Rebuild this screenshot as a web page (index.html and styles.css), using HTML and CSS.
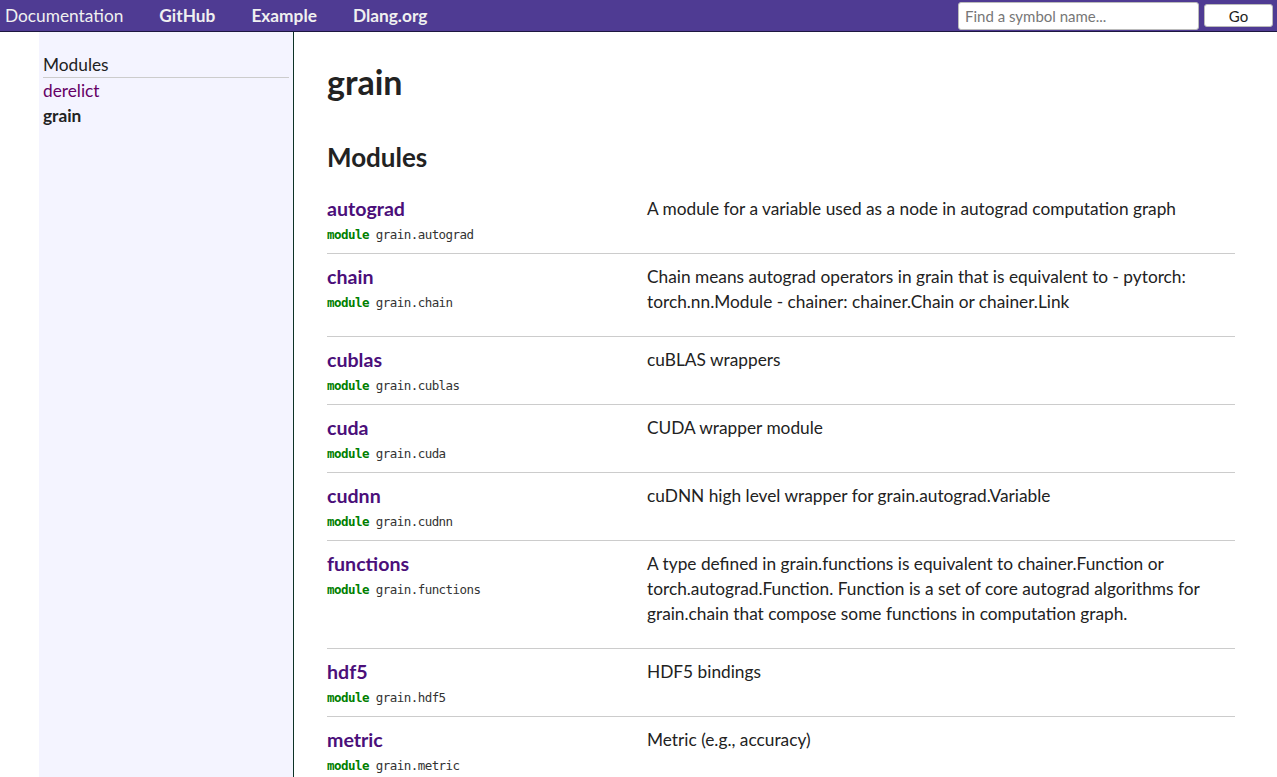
FILE: index.html
```html
<!DOCTYPE html>
<html>
<head>
<meta charset="utf-8">
<title>grain</title>
<link rel="stylesheet" href="styles.css">
</head>
<body>
<header class="navbar">
  <nav class="nav-links">
    <a class="nav-home" href="#">Documentation</a>
    <a class="nav-link" href="#">GitHub</a>
    <a class="nav-link" href="#">Example</a>
    <a class="nav-link" href="#">Dlang.org</a>
  </nav>
  <form class="search">
    <input class="search-input" type="text" placeholder="Find a symbol name...">
    <button class="search-btn" type="button">Go</button>
  </form>
</header>
<div class="page">
  <aside class="sidebar">
    <div class="side-title">Modules</div>
    <ul class="side-list">
      <li><a class="side-link" href="#">derelict</a></li>
      <li><span class="side-current">grain</span></li>
    </ul>
  </aside>
  <main class="content">
    <h1 class="title">grain</h1>
    <h2 class="section">Modules</h2>
    <table class="members">
      <tr>
        <td class="name-cell"><a class="member-name" href="#">autograd</a><div class="decl"><span class="kw">module</span> grain.autograd</div></td>
        <td class="desc-cell"><p>A module for a variable used as a node in autograd computation graph</p></td>
      </tr>
      <tr>
        <td class="name-cell"><a class="member-name" href="#">chain</a><div class="decl"><span class="kw">module</span> grain.chain</div></td>
        <td class="desc-cell"><p>Chain means autograd operators in grain that is equivalent to - pytorch: torch.nn.Module - chainer: chainer.Chain or chainer.Link</p></td>
      </tr>
      <tr>
        <td class="name-cell"><a class="member-name" href="#">cublas</a><div class="decl"><span class="kw">module</span> grain.cublas</div></td>
        <td class="desc-cell"><p>cuBLAS wrappers</p></td>
      </tr>
      <tr>
        <td class="name-cell"><a class="member-name" href="#">cuda</a><div class="decl"><span class="kw">module</span> grain.cuda</div></td>
        <td class="desc-cell"><p>CUDA wrapper module</p></td>
      </tr>
      <tr>
        <td class="name-cell"><a class="member-name" href="#">cudnn</a><div class="decl"><span class="kw">module</span> grain.cudnn</div></td>
        <td class="desc-cell"><p>cuDNN high level wrapper for grain.autograd.Variable</p></td>
      </tr>
      <tr>
        <td class="name-cell"><a class="member-name" href="#">functions</a><div class="decl"><span class="kw">module</span> grain.functions</div></td>
        <td class="desc-cell"><p>A type defined in grain.functions is equivalent to chainer.Function or torch.autograd.Function. Function is a set of core autograd algorithms for grain.chain that compose some functions in computation graph.</p></td>
      </tr>
      <tr>
        <td class="name-cell"><a class="member-name" href="#">hdf5</a><div class="decl"><span class="kw">module</span> grain.hdf5</div></td>
        <td class="desc-cell"><p>HDF5 bindings</p></td>
      </tr>
      <tr>
        <td class="name-cell"><a class="member-name" href="#">metric</a><div class="decl"><span class="kw">module</span> grain.metric</div></td>
        <td class="desc-cell"><p>Metric (e.g., accuracy)</p></td>
      </tr>
    </table>
  </main>
</div>
</body>
</html>
```

FILE: styles.css
```css
html, body {
  margin: 0;
  padding: 0;
  background: #fff;
  color: #222;
  font-family: Lato, "Open Sans", sans-serif;
  font-size: 17.3px;
  overflow: hidden;
}

.navbar {
  display: flex;
  align-items: center;
  justify-content: space-between;
  height: 31px;
  background: #4f3b93;
  border-bottom: 1px solid #1d1740;
}

.nav-links {
  display: flex;
  align-items: center;
}

.nav-links a {
  color: #f0f0f0;
  text-decoration: none;
  font-size: 17.3px;
}

.nav-home {
  padding: 0 36px 0 5px;
}

.nav-link {
  font-weight: bold;
  padding-right: 36px;
}

.search {
  display: flex;
  align-items: center;
  gap: 5px;
  padding-right: 4px;
}

.search-input {
  width: 241px;
  height: 28px;
  box-sizing: border-box;
  border: 1px solid #bbb;
  border-radius: 3px;
  padding: 0 6px;
  font-family: inherit;
  font-size: 15px;
  color: #333;
}

.search-input::placeholder {
  color: #777;
}

.search-btn {
  width: 69px;
  height: 23px;
  box-sizing: border-box;
  border: 1px solid #bbb;
  border-radius: 3px;
  background: #fff;
  font-family: inherit;
  font-size: 15px;
  color: #222;
  padding: 0;
}

.page {
  display: flex;
  min-height: 745px;
}

.sidebar {
  width: 255px;
  margin-left: 39px;
  background: #f4f4ff;
  border-right: 1px solid #0d3326;
  padding: 21px 4px 0 4px;
  box-sizing: border-box;
}

.side-title {
  line-height: 24px;
  border-bottom: 1px solid #ccc;
}

.side-list {
  list-style: none;
  margin: 0;
  padding: 0;
}

.side-list li {
  line-height: 25px;
}

.side-link {
  color: #660066;
  text-decoration: none;
}

.side-current {
  font-weight: bold;
  color: #222;
}

.content {
  padding: 0 0 0 33px;
  width: 908px;
}

.title {
  font-size: 34px;
  font-weight: bold;
  margin: 28px 0 0;
  line-height: 44px;
  color: #222;
}

.section {
  font-size: 26px;
  font-weight: bold;
  margin: 35px 0 0;
  line-height: 36px;
  color: #222;
}

.members {
  width: 908px;
  border-collapse: collapse;
  margin-top: 11px;
}

.members tr + tr {
  border-top: 1px solid #ccc;
}

.name-cell {
  width: 320px;
  vertical-align: top;
  padding: 9px 0 6px;
}

.member-name {
  display: block;
  color: #4b0f7a;
  font-weight: bold;
  font-size: 19.6px;
  line-height: 28px;
  text-decoration: none;
}

.decl {
  font-family: "DejaVu Sans Mono", monospace;
  font-size: 12.5px;
  line-height: 24px;
  letter-spacing: -0.55px;
  color: #333;
}

.kw {
  color: #008000;
  font-weight: bold;
}

.desc-cell {
  vertical-align: top;
  padding: 10px 0 6px;
  line-height: 25px;
}

.desc-cell p {
  margin: 0 0 16px;
}
```
